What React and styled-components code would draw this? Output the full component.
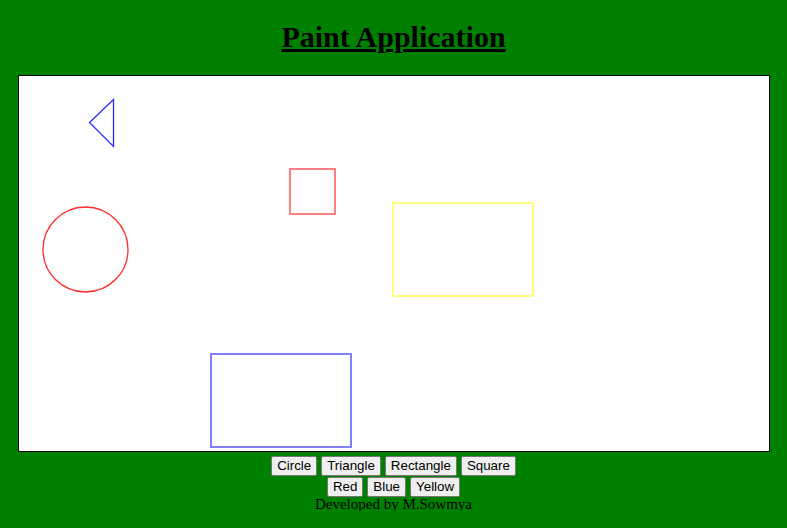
import React from "react";
import styled, { createGlobalStyle } from "styled-components";

const Global = createGlobalStyle`
  html, body { background: #008000; }
  body { margin: 8px; font-family: "Liberation Serif", "Times New Roman", serif; color: #000; }
`;

const Page = styled.div`
  display: flex;
  flex-direction: column;
  align-items: center;
`;

const Title = styled.h1`
  font-size: 30px;
  font-weight: bold;
  text-decoration: underline;
  margin: 12px 0 20px;
  line-height: 34.5px;
`;

const Canvas = styled.div`
  width: 750px;
  height: 375px;
  background: #fff;
  border: 1px solid #000;
  display: flex;
`;

const Row = styled.div`
  display: flex;
  justify-content: center;
  gap: 4px;
  margin-top: ${(p) => p.$top}px;
`;

const Btn = styled.button`
  font-family: "Liberation Sans", Arial, sans-serif;
  font-size: 13.33px;
  line-height: 16px;
  padding: 1px 5px;
  border: 1px solid #767676;
  border-radius: 2px;
  background: #efefef;
  color: #000;
  cursor: pointer;
`;

const Footer = styled.div`
  font-size: 15px;
  line-height: 13px;
  margin-top: 1px;
`;

export default function App() {
  return (
    <>
      <Global />
      <Page>
        <Title>Paint Application</Title>
        <Canvas>
          <svg width="750" height="375" viewBox="0 0 750 375">
            <polygon points="94.5,23.5 70.5,46.5 94.5,70.5" fill="none" stroke="#2a2aff" strokeWidth="1.3" />
            <circle cx="66.5" cy="173.5" r="42.5" fill="none" stroke="#ff2a2a" strokeWidth="1.3" />
            <rect x="271" y="93" width="45" height="45" fill="none" stroke="#ff8080" strokeWidth="2" />
            <rect x="374" y="127" width="140" height="93" fill="none" stroke="#ffff80" strokeWidth="2" />
            <rect x="192" y="278" width="140" height="93" fill="none" stroke="#8080ff" strokeWidth="2" />
          </svg>
        </Canvas>
        <Row $top={4}>
          <Btn>Circle</Btn>
          <Btn>Triangle</Btn>
          <Btn>Rectangle</Btn>
          <Btn>Square</Btn>
        </Row>
        <Row $top={1}>
          <Btn>Red</Btn>
          <Btn>Blue</Btn>
          <Btn>Yellow</Btn>
        </Row>
        <Footer>Developed by M.Sowmya</Footer>
      </Page>
    </>
  );
}
